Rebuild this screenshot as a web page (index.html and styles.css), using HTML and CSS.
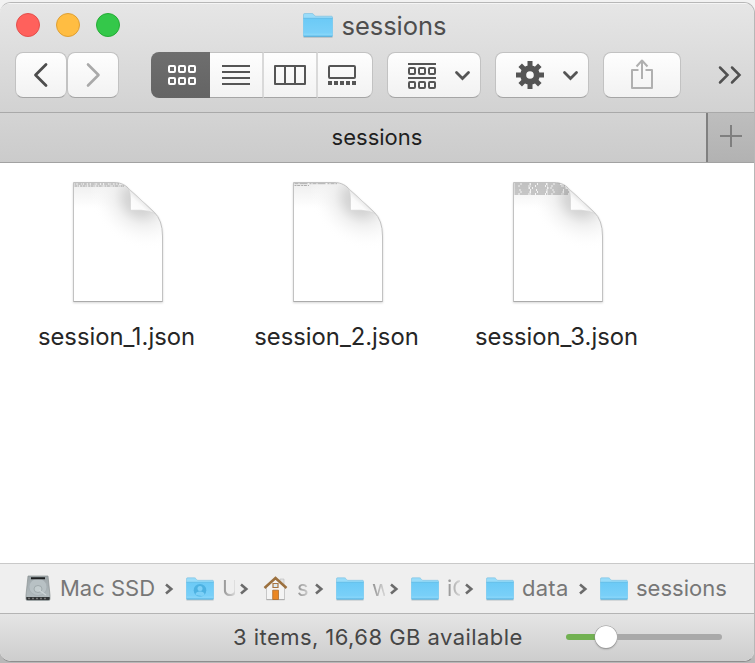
FILE: index.html
```
<!DOCTYPE html>
<html lang="en">
<head>
<meta charset="utf-8">
<title>sessions</title>
<link rel="stylesheet" href="styles.css">
</head>
<body>
<svg class="defs" width="0" height="0" aria-hidden="true">
  <defs>
    <linearGradient id="blue" x1="0" y1="0" x2="0" y2="1"><stop offset="0" stop-color="#6bcaf6"/><stop offset="1" stop-color="#7dd1f9"/></linearGradient>
    <linearGradient id="shade" gradientUnits="userSpaceOnUse" x1="24" y1="1" x2="24" y2="27"><stop offset="0" stop-color="#ededed"/><stop offset="1" stop-color="#fff"/></linearGradient>
    <radialGradient id="curl" gradientUnits="userSpaceOnUse" cx="0" cy="0" r="1" gradientTransform="translate(68 20) rotate(43) scale(54 44)"><stop offset="0" stop-color="#c8c8c8"/><stop offset=".28" stop-color="#dadada"/><stop offset=".5" stop-color="#eee" stop-opacity=".85"/><stop offset="1" stop-color="#fff" stop-opacity="0"/></radialGradient>
    <linearGradient id="fold" gradientUnits="userSpaceOnUse" x1="60" y1="30" x2="70" y2="19"><stop offset="0" stop-color="#fff"/><stop offset=".7" stop-color="#fafafa"/><stop offset="1" stop-color="#e9e9e9"/></linearGradient>
    <linearGradient id="metal" x1="0" y1="0" x2="0" y2="1"><stop offset="0" stop-color="#9fa7aa"/><stop offset="1" stop-color="#b4bdc0"/></linearGradient>
    <symbol id="folder" viewBox="0 0 30 25">
      <path d="M.5 24.2H29.5" stroke="#a9b4ba" stroke-width="1.4" opacity=".7"/>
      <path d="M.5 23V1.7Q.5.5 1.7.5H9q1 0 1.700 1l.8 1q.5.7 1.500.7h15.300q1.200 0 1.200 1.200V23z" fill="#99dcf9" stroke="#75bcdf" stroke-width=".6"/>
      <path d="M.4 5.200H29.600V22.400q0 1-1 1H1.400q-1 0-1-1z" fill="url(#blue)"/>
      <path d="M.4 5.300H29.600" stroke="#5eb9e4" stroke-width=".8"/>
      <path d="M.6 21.200H29.400" stroke="#95dcfb" stroke-width=".7"/>
      <path d="M.6 23.300H29.400" stroke="#4fa9d4" stroke-width=".9"/>
    </symbol>
    <symbol id="paper" viewBox="0 0 94 124">
      <path d="M2.500 1.500H43C51 1.500 55.500 5 58.500 8.500L83 31Q91.500 39 91.500 55V120.500H2.500z" fill="url(#shade)"/>
      <path d="M10 1.500H43C51 1.500 55.500 5 58.500 8.500L83 31Q91.500 39 91.500 55V75H10z" fill="url(#curl)"/>
      <path d="M2.500 1.500H43C51 1.500 55.500 5 58.500 8.500L83 31Q91.500 39 91.500 55V120.500H2.500z" fill="none" stroke="#c2c2c2" stroke-width="1"/>
      <path d="M2.500 120.500H91.500" stroke="#ababab"/>
      <path d="M57.500 8Q59.500 12 59.500 18V29.200H70Q78 29.500 84 32.500L68 17.200z" fill="url(#fold)" stroke="#d2d2d2" stroke-width=".6"/>
    </symbol>
    <symbol id="sep" viewBox="0 0 10 14"><path d="M2 2.500 7.300 7 2 11.500" fill="none" stroke="#6b6b6b" stroke-width="2.600"/></symbol>
  </defs>
</svg>
<main class="window">
  <header class="head">
    <div class="titlebar">
      <div class="lights"><i class="light red"></i><i class="light amber"></i><i class="light green"></i></div>
      <div class="title"><svg width="30" height="25"><use href="#folder"/></svg><span>sessions</span></div>
    </div>
    <div class="toolbar">
      <button class="btn nav"><svg viewBox="16 52 50 46"><path d="M46 64.500 35.500 75 46 85.500" fill="none" stroke="#4d4d4d" stroke-width="2.800" stroke-linecap="round" stroke-linejoin="round"/></svg></button>
      <button class="btn nav next"><svg viewBox="68 52 50 46"><path d="M88 64.500 98.500 75 88 85.500" fill="none" stroke="#a9a9a9" stroke-width="2.600" stroke-linecap="round" stroke-linejoin="round"/></svg></button>
      <div class="views">
        <button class="seg on"><svg width="59" height="46" viewBox="151 52 59 46"><g fill="none" stroke="#fff" stroke-width="2"><rect x="169" y="66" width="6" height="6" rx="1"/><rect x="179" y="66" width="6" height="6" rx="1"/><rect x="189" y="66" width="6" height="6" rx="1"/><rect x="169" y="78" width="6" height="6" rx="1"/><rect x="179" y="78" width="6" height="6" rx="1"/><rect x="189" y="78" width="6" height="6" rx="1"/></g></svg></button>
        <button class="seg"><svg width="52" height="46" viewBox="210 52 52 46"><path d="M222 66h28M222 72h28M222 78h28M222 84h28" stroke="#555" stroke-width="2"/></svg></button>
        <button class="seg"><svg width="52" height="46" viewBox="264 52 52 46"><path d="M275 66h30v18h-30zM285 66v18M295 66v18" fill="none" stroke="#555" stroke-width="2" stroke-linejoin="round"/></svg></button>
        <button class="seg last"><svg width="54" height="46" viewBox="318 52 54 46"><rect x="329" y="66" width="26" height="12" rx="1" fill="none" stroke="#555" stroke-width="2"/><path d="M328 83h28" stroke="#555" stroke-width="4" stroke-dasharray="4 2"/></svg></button>
      </div>
      <button class="btn arrange"><svg viewBox="388 52 92 46"><path d="M408 64h28M408 78h28" stroke="#555" stroke-width="2"/><g fill="none" stroke="#555" stroke-width="2"><rect x="409" y="68" width="6" height="6" rx="1"/><rect x="419" y="68" width="6" height="6" rx="1"/><rect x="429" y="68" width="6" height="6" rx="1"/><rect x="409" y="82" width="6" height="6" rx="1"/><rect x="419" y="82" width="6" height="6" rx="1"/><rect x="429" y="82" width="6" height="6" rx="1"/></g><path d="m456.500 72.500 6 6 6-6" fill="none" stroke="#555" stroke-width="2.800" stroke-linecap="round"/></svg></button>
      <button class="btn action"><svg viewBox="496 52 92 46"><g stroke="#555" stroke-width="5"><path d="M530 61v6M530 83v6M516 75h6M538 75h6"/><path d="m520.200 65.200 4 4M535.800 80.800l4 4M539.800 65.200l-4 4M524.200 80.800l-4 4"/></g><circle cx="530" cy="75" r="6.800" fill="none" stroke="#555" stroke-width="6"/><path d="m564.500 72.500 6 6 6-6" fill="none" stroke="#555" stroke-width="2.800" stroke-linecap="round"/></svg></button>
      <button class="btn share"><svg viewBox="604 52 76 46"><path d="M638.500 70h-6.500v18h20V70h-6.500M642 79V61M636.500 66.500l5.500-6 5.500 6" fill="none" stroke="#b0b0b0" stroke-width="2" stroke-linejoin="round"/></svg></button>
      <svg class="more" width="24" height="20" viewBox="718 65 24 20"><path d="m720 67.500 7.500 7.500-7.500 7.500M732 67.500l7.500 7.500-7.500 7.500" fill="none" stroke="#505050" stroke-width="2.500" stroke-linecap="round"/></svg>
    </div>
  </header>
  <nav class="tabs">
    <div class="tab"><span>sessions</span></div>
    <button class="add"><svg width="46" height="49" viewBox="708 113 46 49"><path d="M720 136h22M731 125v22" stroke="#7f7f7f" stroke-width="2"/></svg></button>
  </nav>
  <section class="files">
    <figure class="file">
      <svg class="doc" width="94" height="124"><use href="#paper"/><g stroke="#777" fill="none" stroke-width="1" opacity=".7"><path d="M3.500 3H48" stroke-dasharray="2 1 4 .6 1 .7 3 1"/><path d="M3.500 5H53" stroke-dasharray="3 .6 1 1 2 .5"/></g></svg>
      <figcaption>session_1.json</figcaption>
    </figure>
    <figure class="file">
      <svg class="doc" width="94" height="124"><use href="#paper"/><g stroke="#777" fill="none" stroke-width=".9" opacity=".6"><path d="M3.500 2.700H46" stroke-dasharray="4 1 8 2 2 1"/><path d="M3.500 4.500H18" stroke-dasharray="2 .7 3 1"/></g></svg>
      <figcaption>session_2.json</figcaption>
    </figure>
    <figure class="file">
      <svg class="doc" width="94" height="124"><use href="#paper"/><g stroke="#777" fill="none" stroke-width="1" opacity=".75"><path d="M3.500 3H49M3.500 11H58" stroke-dasharray="6 1 8 1.500"/><path d="M3.500 5H54M3.500 13H58" stroke-dasharray="4 1 9 1 1 .5"/><path d="M3.500 7H56" stroke-dasharray="14 1.500 2 1"/><path d="M3.500 9H57" stroke-dasharray="5 1 9.500 1"/></g></svg>
      <figcaption>session_3.json</figcaption>
    </figure>
  </section>
  <nav class="path">
    <span class="crumb disk"><svg width="26" height="27" viewBox="0 0 26 27"><path d="M3 1h20l2 19v4q0 1.500-1.500 1.500h-21Q1 25.500 1 24v-4z" fill="url(#metal)" stroke="#8b9294" stroke-width=".7"/><ellipse cx="13" cy="12" rx="9" ry="8.500" fill="#b8c1c4" stroke="#a5aeb1" stroke-width=".7"/><ellipse cx="13" cy="14" rx="4" ry="3.500" fill="#c4cdcf" stroke="#929c9f" stroke-width=".7"/><path d="m14 15 7 5" stroke="#ccd4d6" stroke-width="1.200"/><path d="M6 3.300h14" stroke="#1d1f20" stroke-width="2"/><path d="M1.300 22h23.400v2q0 1-1 1H2.300q-1 0-1-1z" fill="#333637"/><path d="M3 23.500h20" stroke="#777" stroke-width="1.500" stroke-dasharray="2 2"/></svg><b>Mac SSD</b><svg class="sep"><use href="#sep"/></svg></span>
    <span class="crumb users"><svg width="28" height="24" viewBox="0 0 28 24"><use href="#folder" width="28" height="24"/><circle cx="14" cy="13.300" r="6.300" fill="#4db2e2"/><circle cx="14" cy="11.500" r="2.500" fill="#7dd0f7"/><path d="M9.500 17q.5-2.500 4.500-2.500t4.500 2.500-4.500 1.800T9.500 17" fill="#7dd0f7"/></svg><b class="cut">U</b><svg class="sep"><use href="#sep"/></svg></span>
    <span class="crumb home"><svg width="25" height="25" viewBox="0 0 25 25"><path d="M17 3h4v7h-4z" fill="#e2e2e2" stroke="#bbb" stroke-width=".6"/><path d="M3.500 11 12.500 3l9 8v12.500h-18z" fill="#f4f4f4" stroke="#b5b5b5" stroke-width=".7"/><path d="M3.500 23.700h18" stroke="#a9a9a9"/><path d="M1.500 12 12.500 2l11 10" fill="none" stroke="#9c713f" stroke-width="2.500"/><path d="M9.700 14.200h5.800v9.300H9.700z" fill="#ea8623" stroke="#ad6b2d" stroke-width=".8"/><path d="M10 7.500h5v4h-5z" fill="#dceaf2" stroke="#a87542" stroke-width="1.200"/></svg><b class="cut">s</b><svg class="sep"><use href="#sep"/></svg></span>
    <span class="crumb work"><svg width="28" height="24"><use href="#folder"/></svg><b class="cut">w</b><svg class="sep"><use href="#sep"/></svg></span>
    <span class="crumb icloud"><svg width="28" height="24"><use href="#folder"/></svg><b class="cut">iC</b><svg class="sep"><use href="#sep"/></svg></span>
    <span class="crumb data"><svg width="28" height="24"><use href="#folder"/></svg><b>data</b><svg class="sep"><use href="#sep"/></svg></span>
    <span class="crumb here"><svg width="28" height="24"><use href="#folder"/></svg><b>sessions</b></span>
  </nav>
  <footer class="status">
    <span class="info">3 items, 16,68 GB available</span>
    <div class="slider"><i class="fill"></i><i class="knob"></i><i class="rest"></i></div>
  </footer>
</main>
</body>
</html>
```
FILE: styles.css
```
* { box-sizing: border-box; }
html { height: 663px; overflow: hidden; }
body {
  margin: 0;
  width: 755px;
  height: 663px;
  padding-top: 2px;
  overflow: hidden;
  background: linear-gradient(#f2f2f2 0 50%, #b8b8b8 50%);
  font-family: Inter, "Liberation Sans", sans-serif;
  color: #262626;
}
.defs { display: block; height: 0; }
button { appearance: none; border: 0; padding: 0; margin: 0; background: none; font: inherit; }
.window {
  width: 755px;
  height: 660px;
  display: flex;
  flex-direction: column;
  border: 1px solid #b7b7b7;
  border-left: 0;
  border-bottom-color: #8e8e8e;
  border-radius: 11px;
  background: #fff;
  overflow: hidden;
}
.head {
  height: 110px;
  flex: none;
  border-top: 1px solid #f5f5f5;
  border-bottom: 1px solid #a9a9a9;
  background: linear-gradient(#e6e6e6, #d2d2d2);
}
.titlebar { position: relative; height: 48px; display: flex; justify-content: center; padding-top: 9px; }
.lights { position: absolute; left: 16px; top: 9px; display: flex; gap: 16px; }
.light { width: 24px; height: 24px; border-radius: 50%; border: 1px solid; }
.red { background: #ff615c; border-color: #e34f4c; }
.amber { background: #ffbd42; border-color: #de9f34; }
.green { background: #34c84a; border-color: #26ac36; }
.title { display: flex; gap: 9px; height: 25px; margin-right: 5px; align-items: center; color: #4e4e4e; font-size: 25.5px; line-height: 25px; letter-spacing: -.04px; }
.toolbar { display: flex; padding-left: 15px; align-items: center; height: 46px; }
.btn {
  height: 46px;
  border: 1px solid #c2c2c2;
  border-bottom-color: #a5a5a5;
  border-radius: 8px;
  background: linear-gradient(#fefefe, #f2f2f2);
  flex: none;
}
.btn svg { display: block; width: 100%; height: 46px; margin-top: -1px; }
.nav { width: 52px; }
.next { margin-right: 32px; }
.views { display: flex; flex: none; width: 222px; height: 46px; margin-right: 14px; }
.seg { width: 54px; flex: none; height: 46px; border: solid; border-width: 1px 2px 1px 0; border-color: #c2c2c2 #d9d9d9 #a5a5a5; background: linear-gradient(#fefefe, #f2f2f2); }
.seg svg { display: block; margin-top: -1px; }
.seg.on { width: 59px; border: 0; border-radius: 8px 0 0 8px; background: linear-gradient(#6e6e6e, #646464); }
.seg.on svg { margin-top: 0; }
.seg.last { width: 55px; border-right: 1px solid #c2c2c2; border-radius: 0 8px 8px 0; }
.arrange, .action { width: 94px; margin-right: 14px; }
.share { width: 78px; margin-right: 37px; }
.more { display: block; flex: none; }
.tabs { display: flex; height: 50px; flex: none; border-bottom: 1px solid #a2a2a2; background: linear-gradient(#d4d4d4, #cbcbcb); }
.tab { width: 706px; padding: 0 0 2px 48px; display: flex; align-items: center; justify-content: center; font-size: 22px; line-height: 28px; color: #1f1f1f; }
.add { width: 48px; border-left: 2px solid #808080; background: linear-gradient(#bebebe, #b2b2b2); }
.add svg { display: block; }
.files { flex: 1; display: flex; padding: 18px 0 0 7px; }
.file { width: 220px; margin: 0; display: flex; flex-direction: column; align-items: center; }
.doc { display: block; filter: drop-shadow(0 1.5px 1.2px rgba(0,0,0,.16)); margin-left: 2px; }
figcaption { margin: 17px 1px 0 0; font-size: 23.8px; line-height: 30px; white-space: nowrap; color: #262626; }
.path { height: 51px; flex: none; display: flex; align-items: center; padding-left: 25px; border-top: 1px solid #c9c9c9; border-bottom: 1px solid #b4b4b4; background: #efefef; }
.crumb { display: flex; align-items: center; flex: none; height: 28px; color: #777; }
.crumb > svg { flex: none; }
.crumb b { flex: none; font-weight: 400; font-size: 22px; line-height: 28px; white-space: nowrap; margin-left: 8px; padding-bottom: 1px; }
.crumb .sep { width: 10px; height: 14px; margin-left: auto; }
.disk { width: 149px; margin-right: 12px; }
.disk b { margin-left: 9px; }
.users { width: 63px; margin-right: 14px; }
.home { width: 61px; margin-right: 12px; }
.work, .icloud { width: 63px; margin-right: 12px; }
.data { width: 102px; margin-right: 12px; }
.home svg + b { margin-left: 9px; }
.crumb .cut { width: 13px; -webkit-mask-image: linear-gradient(90deg, rgba(0,0,0,.8), rgba(0,0,0,.2)); mask-image: linear-gradient(90deg, rgba(0,0,0,.8), rgba(0,0,0,.2)); }
.status { height: 47px; flex: none; display: flex; align-items: center; background: linear-gradient(#e5e5e5, #cdcdcd); padding: 0 0 1px 233px; font-size: 22px; line-height: 28px; letter-spacing: .45px; color: #464646; }
.info { width: 333px; white-space: nowrap; }
.slider { width: 156px; height: 24px; display: flex; align-items: center; }
.fill { width: 29px; height: 6px; border-radius: 3px 0 0 3px; background: #72b152; }
.knob { width: 22px; height: 22px; border-radius: 50%; background: #fff; box-shadow: 0 0 0 .5px #999, 0 1px 2px rgba(0,0,0,.35); }
.rest { flex: 1; height: 6px; border-radius: 0 3px 3px 0; background: #a9a9a9; }
.data b { letter-spacing: .25px; }
```
